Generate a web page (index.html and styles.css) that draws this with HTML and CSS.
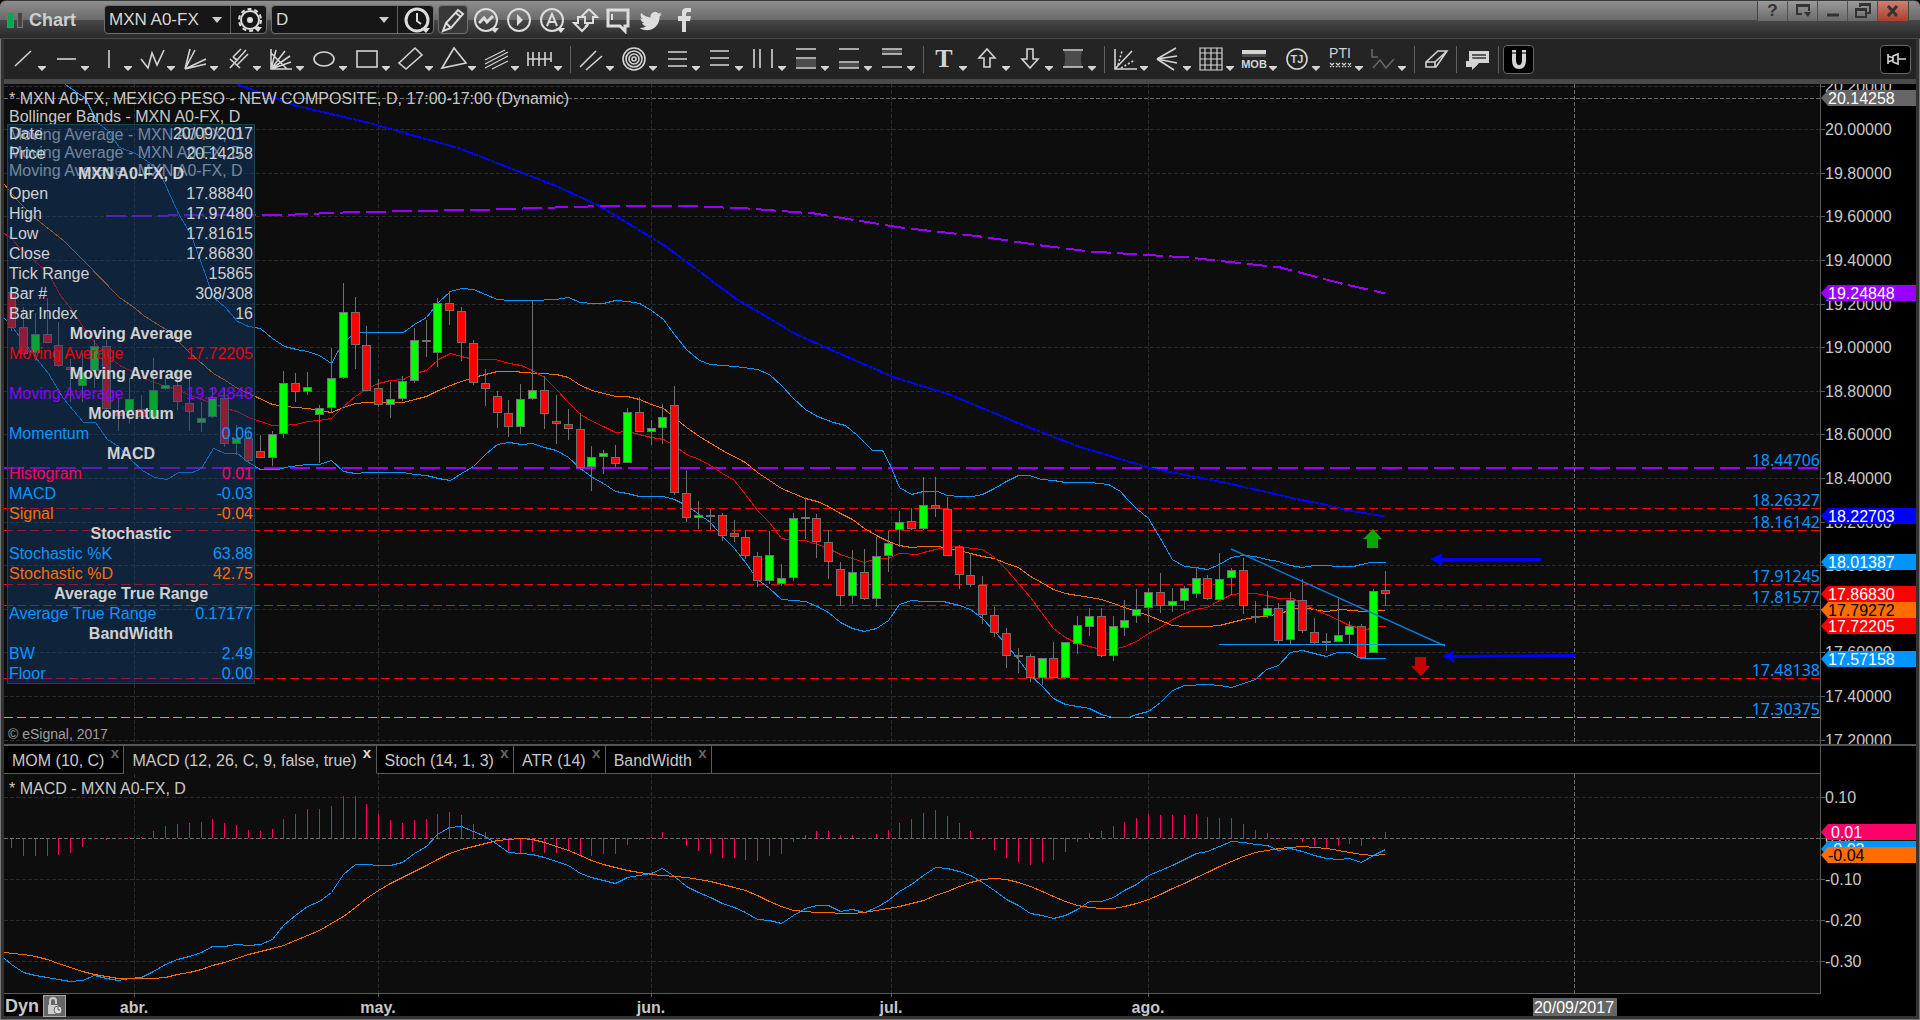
FILE: index.html
```html
<!DOCTYPE html>
<html lang="en">
<head>
<meta charset="utf-8">
<title>Chart - MXN A0-FX</title>
<link rel="stylesheet" href="styles.css">
</head>
<body>
<div class="window">
  <header class="titlebar">
    <span class="logo"><i class="logo-on"></i><i class="logo-off"></i></span>
    <h1 class="title">Chart</h1>
    <div class="combo">
      <label class="pick pick-symbol"><select aria-label="Symbol"><option>MXN A0-FX</option></select><svg width="10" height="6"><path d="M0 0h10l-5 6z"/></svg></label>
      <button class="combo-btn" aria-label="Symbol settings"><svg class="ic" width="28" height="28" viewBox="0 0 28 28"><circle cx="15" cy="14" r="9" stroke-width="2"/><circle cx="15" cy="14" r="11" stroke-width="2" stroke-dasharray="4 3"/><circle class="fill" cx="15" cy="14" r="3"/><path class="fill" d="M18 21h9l-4 5z"/></svg></button>
    </div>
    <div class="combo combo-2">
      <label class="pick pick-interval"><select aria-label="Interval"><option>D</option></select><svg width="10" height="6"><path d="M0 0h10l-5 6z"/></svg></label>
      <button class="combo-btn" aria-label="Time template"><svg class="ic" width="28" height="28" viewBox="0 0 28 28"><circle cx="15" cy="14" r="11" stroke-width="3"/><path d="M15 7v8l4 3" stroke-width="2"/><path class="fill" d="M19 22h9l-4 5z"/></svg></button>
    </div>
    <nav class="quick">
      <button class="pressed" aria-label="Draw"><svg class="ic" width="28" height="28" viewBox="0 0 28 28"><path d="M4 25l3-8L19 4l5 4-12 14zM7 17l5 5M17 7l5 4" stroke-width="2"/></svg></button>
      <button aria-label="Studies"><svg class="ic" width="28" height="28" viewBox="0 0 28 28"><circle cx="14" cy="14" r="11" stroke-width="2"/><path d="M7 17l5-5 3 4 6-6" stroke-width="3"/><path class="fill" d="M18 22h9l-4 5z"/></svg></button>
      <button aria-label="Play"><svg class="ic" width="28" height="28" viewBox="0 0 28 28"><circle cx="14" cy="14" r="11" stroke-width="2"/><path class="fill" d="M12 8v12l6-6z"/></svg></button>
      <button aria-label="Annotate"><svg class="ic" width="28" height="28" viewBox="0 0 28 28"><circle cx="14" cy="14" r="11" stroke-width="2"/><path d="M9 20l5-12 5 12M11 16h6" stroke-width="2"/><path class="fill" d="M18 22h9l-4 5z"/></svg></button>
      <button aria-label="Trade arrows"><svg class="ic" width="28" height="28" viewBox="0 0 28 28"><path d="M18 3l8 8h-4v6h-4l-4 4M18 3l-8 8h4v6h4" stroke-width="2"/><path d="M10 11H7v6H3l8 8 6-6" stroke-width="2"/></svg></button>
      <button aria-label="Comment"><svg class="ic" width="28" height="28" viewBox="0 0 28 28"><path d="M4 4h20v16h-3v5l-5-5H4z" stroke-width="3"/><path d="M8 8v6" stroke-width="2"/></svg></button>
      <button aria-label="Twitter"><svg class="ic" width="28" height="28" viewBox="0 0 28 28"><path class="fill" d="M25 8c-1 .5-1.700.7-2.600.8.9-.6 1.600-1.400 2-2.500-.9.5-1.900.9-2.900 1.100A4.600 4.600 0 0 0 13.600 11.500C9.800 11.300 6.400 9.500 4.200 6.700c-1.200 2.100-.6 4.800 1.400 6.100-.7 0-1.500-.2-2.100-.6 0 2.200 1.600 4.200 3.700 4.600-.7.2-1.400.2-2.100.1.600 1.900 2.300 3.100 4.300 3.200A9.200 9.200 0 0 1 2.600 22c8.900 5.500 20.200.2 20-11.500 1-.7 1.800-1.500 2.400-2.500z"/></svg></button>
      <button aria-label="Facebook"><svg class="ic" width="28" height="28" viewBox="0 0 28 28"><path class="fill" d="M12 26V15H8v-5h4V7c0-4 2-5 5-5h4v4h-3c-1 0-2 .5-2 2v2h5l-1 5h-4v11z"/></svg></button>
    </nav>
    <div class="winbtns">
      <button aria-label="Help">?</button>
      <button aria-label="Detach"><svg width="18" height="18" viewBox="0 0 18 18"><path d="M8 12H3V3h12v6M3 4h12" /><path class="dark" d="M10 10h7l-3 5z"/></svg></button>
      <button aria-label="Minimize"><svg width="18" height="18" viewBox="0 0 18 18"><path d="M3 13h12" stroke-width="3"/></svg></button>
      <button aria-label="Restore"><svg width="18" height="18" viewBox="0 0 18 18"><path d="M6 5V2h10v9h-3M6 3h10M2 7h10v8H2zM2 8h10"/></svg></button>
      <button class="close" aria-label="Close"><svg width="18" height="18" viewBox="0 0 18 18"><path d="M4 4l9 10M13 4L4 14" stroke-width="3"/></svg></button>
    </div>
  </header>

  <div class="frame">
    <nav class="toolbar" id="toolbar"></nav>

    <main class="charts">
      <section class="pane price">
        <svg class="plot" id="pricePlot" role="img" aria-label="Price candles"></svg>
        <svg class="axis" id="priceAxis"></svg>
        <ul class="studies">
          <li>* MXN A0-FX, MEXICO PESO - NEW COMPOSITE, D, 17:00-17:00 (Dynamic)</li>
          <li>Bollinger Bands - MXN A0-FX, D</li>
          <li>Moving Average - MXN A0-FX, D</li>
          <li>Moving Average - MXN A0-FX, D</li>
          <li>Moving Average - MXN A0-FX, D</li>
        </ul>
        <table class="cursor">
          <tr><td>Date</td><td>20/09/2017</td></tr>
          <tr><td>Price</td><td>20.14258</td></tr>
          <tr><th colspan="2">MXN A0-FX, D</th></tr>
          <tr><td>Open</td><td>17.88840</td></tr>
          <tr><td>High</td><td>17.97480</td></tr>
          <tr><td>Low</td><td>17.81615</td></tr>
          <tr><td>Close</td><td>17.86830</td></tr>
          <tr><td>Tick Range</td><td>15865</td></tr>
          <tr><td>Bar #</td><td>308/308</td></tr>
          <tr><td>Bar Index</td><td>16</td></tr>
          <tr><th colspan="2">Moving Average</th></tr>
          <tr class="red"><td>Moving Average</td><td>17.72205</td></tr>
          <tr><th colspan="2">Moving Average</th></tr>
          <tr class="purple"><td>Moving Average</td><td>19.24848</td></tr>
          <tr><th colspan="2">Momentum</th></tr>
          <tr class="blue"><td>Momentum</td><td>0.06</td></tr>
          <tr><th colspan="2">MACD</th></tr>
          <tr class="pink"><td>Histogram</td><td>0.01</td></tr>
          <tr class="blue"><td>MACD</td><td>-0.03</td></tr>
          <tr class="orange"><td>Signal</td><td>-0.04</td></tr>
          <tr><th colspan="2">Stochastic</th></tr>
          <tr class="blue"><td>Stochastic %K</td><td>63.88</td></tr>
          <tr class="orange"><td>Stochastic %D</td><td>42.75</td></tr>
          <tr><th colspan="2">Average True Range</th></tr>
          <tr class="blue"><td>Average True Range</td><td>0.17177</td></tr>
          <tr><th colspan="2">BandWidth</th></tr>
          <tr class="blue"><td>BW</td><td>2.49</td></tr>
          <tr class="blue"><td>Floor</td><td>0.00</td></tr>
        </table>
        <small class="copyright">© eSignal, 2017</small>
      </section>

      <div class="tabrow">
        <div class="tabs" role="tablist">
          <button role="tab">MOM (10, C)<b>x</b></button>
          <button role="tab" class="active" aria-selected="true">MACD (12, 26, C, 9, false, true)<b>x</b></button>
          <button role="tab">Stoch (14, 1, 3)<b>x</b></button>
          <button role="tab">ATR (14)<b>x</b></button>
          <button role="tab">BandWidth<b>x</b></button>
          <span class="rest"></span>
        </div>
        <div class="tabaxis"></div>
      </div>

      <section class="pane macd">
        <svg class="plot" id="macdPlot" role="img" aria-label="MACD"></svg>
        <svg class="axis" id="macdAxis"></svg>
        <ul class="studies"><li>* MACD - MXN A0-FX, D</li></ul>
      </section>

      <footer class="timebar">
        <svg class="times" id="times"></svg>
        <div class="dyn">
          <span>Dyn</span>
          <button aria-label="Lock time template"><svg width="23" height="22" viewBox="0 0 23 22"><rect x="5" y="10" width="10" height="9" fill="#ccc"/><path d="M7 10V6q0-3 3-3t3 3v3" fill="none" stroke="#ccc" stroke-width="2"/><circle cx="15" cy="15" r="4" fill="#ddd" stroke="#666"/><path d="M15 12v3h2" fill="none" stroke="#555"/></svg></button>
        </div>
      </footer>
    </main>
  </div>
</div>
<script src="chart.js"></script>
</body>
</html>
```
FILE: styles.css
```css
* { box-sizing: border-box; }
body { margin: 0; background: #000; color: #c8c8c8; font: 16px/18px "Liberation Sans", Arial, sans-serif; }
button { font: inherit; color: inherit; background: none; border: 0; padding: 0; margin: 0; display: flex; align-items: center; justify-content: center; }
ul { list-style: none; margin: 0; padding: 0; }
.window { height: 100vh; min-height: 700px; display: flex; flex-direction: column; overflow: hidden; }

.titlebar {
  flex: none; height: 39px; display: flex; align-items: center; padding-left: 7px; position: relative;
  border-top: 1px solid #3a3a3a; border-bottom: 1px solid #4c4c4c; border-radius: 6px 6px 0 0;
  background: linear-gradient(#8e8e8e 0, #6a6a6a 19px, #484848 19px, #292929 100%);
}
.logo { display: flex; gap: 3px; width: 22px; }
.logo i { height: 16px; border: 1px solid #777; }
.logo-on { width: 7px; background: #00a84f; }
.logo-off { width: 6px; background: #444; }
.title { margin: 0; width: 75px; font-size: 18px; line-height: 20px; color: #d0d0d0; }
.combo { display: flex; height: 29px; border: 1px solid #707070; border-radius: 4px; background: #161616; }
.combo-2 { margin-left: 4px; }
.pick { display: grid; align-items: center; width: 126px; border-right: 1px solid #606060; }
.pick select, .pick svg { grid-area: 1 / 1; }
.pick select { appearance: none; width: 100%; height: 27px; background: none; border: 0; padding: 0 0 0 4px; color: #d6d6d6; font: 17px/20px "Liberation Sans", Arial, sans-serif; }
.pick svg { justify-self: end; margin-right: 8px; fill: #ccc; pointer-events: none; }
.combo-btn { width: 35px; }
.ic { fill: none; stroke: #ddd; }
.ic .fill { fill: #ddd; stroke: none; }
.quick { display: flex; gap: 3px; margin-left: 4px; }
.quick button { width: 30px; height: 29px; border: 1px solid transparent; border-radius: 4px; }
.quick .pressed { border-color: #707070; background: #383838; }
.winbtns { position: absolute; right: 11px; top: 0; display: flex; border: 1px solid #444; border-top: 0; border-radius: 0 0 3px 3px; }
.winbtns button { width: 30px; height: 20px; border-right: 1px solid #505050; background: linear-gradient(#9a9a9a, #6a6a6a); color: #333; font-weight: bold; font-size: 17px; }
.winbtns svg { fill: none; stroke: #333; stroke-width: 2; }
.winbtns .dark { fill: #333; stroke: none; }
.winbtns .close { border-right: 0; background: linear-gradient(#cf8070, #a8402c); }

.frame { flex: 1; min-height: 0; display: flex; flex-direction: column; background: #333; padding: 0 3px 3px; border: 1px solid #777; border-top: 0; }
.toolbar { flex: none; height: 45px; display: flex; align-items: center; padding: 0 5px 0 3px; background: #242424; border-bottom: 5px solid #4a4a4a; }
.tool { width: 43px; height: 32px; }
.tool.plain { width: 33px; }
.tool svg { fill: none; stroke: #d4d4d4; stroke-width: 1.6; }
.tool .thin { stroke-width: 1.2; }
.tool .fill { fill: #d4d4d4; stroke: none; }
.tool .shade { fill: #4c4c4c; stroke: none; }
.tool .dim { stroke: #666; }
.tool text { fill: #d4d4d4; stroke: none; font-weight: bold; text-anchor: middle; }
.tool .serif { font-family: "Liberation Serif", serif; }
.sep { width: 1px; height: 27px; margin: 0 4px; background: #606060; }
.tool.boxed { width: 31px; height: 29px; border: 1px solid #666; border-radius: 4px; background: #000; }
.pin { margin-left: auto; }

.charts { flex: 1; min-height: 0; display: flex; flex-direction: column; background: #000; }
.pane { position: relative; display: grid; grid-template-columns: minmax(0, 1fr) 96px; min-height: 0; overflow: hidden; }
.price { flex: 3; }
.macd { flex: 1; }
.plot { width: 100%; height: 100%; min-height: 0; background: #0d0d0d; }
.macd .plot { border-bottom: 1px solid #5a5a5a; }
.axis { width: 96px; height: 100%; min-height: 0; border-left: 1px solid #5a5a5a; }
.studies { position: absolute; left: 5px; top: 6px; }
.cursor { position: absolute; left: 3px; top: 40px; width: 248px; border-collapse: collapse; background: rgba(19, 63, 111, .48); outline: 1px solid #1a4558; outline-offset: -1px; color: #d0d0d0; }
.cursor td, .cursor th { height: 20px; padding: 0 2px; line-height: 20px; }
.cursor td + td { text-align: right; }
.red { color: #f00008; }
.purple { color: #9000f8; }
.blue { color: #0c94ff; }
.pink { color: #ff0068; }
.orange { color: #ff6c00; }
.copyright { position: absolute; left: 4px; bottom: 1px; font-size: 14px; color: #a0a0a0; }

.tabrow { flex: none; display: grid; grid-template-columns: minmax(0, 1fr) 96px; border-top: 2px solid #555; }
.tabs { display: flex; height: 28px; }
.tabs button { padding: 2px 4px 0 8px; gap: 6px; border: solid #5a5a5a; border-width: 0 1px 1px 0; background: #000; }
.tabs b { align-self: flex-start; width: 9px; font-size: 15px; line-height: 10px; color: #666; }
.tabs .active { background: #0d0d0d; border-bottom-color: #0d0d0d; }
.tabs .active b { color: #ddd; }
.rest { flex: 1; border-bottom: 1px solid #5a5a5a; }
.tabaxis { border-left: 1px solid #5a5a5a; }

.timebar { flex: none; position: relative; height: 22px; }
.times { display: block; width: 100%; height: 22px; }
.dyn { position: absolute; left: 1px; top: 0; display: flex; align-items: center; gap: 4px; }
.dyn span { font-weight: bold; font-size: 18px; line-height: 24px; }
.dyn button { width: 23px; height: 22px; background: #666; outline: 1px solid #aaa; outline-offset: -1px; }

svg text { fill: #c8c8c8; font-size: 16px; }
.month { font-weight: bold; text-anchor: middle; }
.level { fill: #0c94ff; font-family: "Noto Sans", sans-serif; text-anchor: end; }
.line { fill: none; shape-rendering: crispEdges; }
.tool text.s10 { font-size: 11px; }
.tool text.s14 { font-size: 14px; font-weight: normal; }
.tool text.s24 { font-size: 26px; }
```
FILE: chart.js
```js
// ---------- drawing toolbar ----------
const T = {
  line: '<path d="M8 23L24 8"/>',
  hline: '<path d="M7 16h19"/>',
  vline: '<path d="M16 7v18"/>',
  zig: '<path d="M5 16l7 9 4-15 5 12 7-15"/>',
  fan: '<path d="M11 6L6 26L16 7M27 16L6 26L27 21"/>',
  fork: '<path d="M8 16l10 9M8 25L24 7M11 14l8-8M15 22l11-11M11 14l4 3"/>',
  gann: '<path d="M6 6v20h21M6 26L11 7M6 26L20 8M6 26L25 13M6 26L26 19M6 10l16 16"/>',
  oval: '<ellipse cx="16" cy="16" rx="10" ry="7"/>',
  rect: '<rect x="6" y="8" width="20" height="16"/>',
  para: '<path d="M5 20L21 5l7 7L12 26z"/>',
  tri: '<path d="M5 25L17 5l12 15z"/>',
  diag: '<path d="M5 17L25 7M5 21L28 9M5 25L28 13M12 26L28 18" class="thin"/>',
  cyc: '<path d="M5 16h23M5 9v14M10 9v14M16 9v14M22 9v14M28 9v10"/>',
  par: '<path d="M5 24L21 8M11 27L27 13"/>',
  rings: '<circle cx="16" cy="16" r="11"/><circle cx="16" cy="16" r="8"/><circle cx="16" cy="16" r="5"/><circle cx="16" cy="16" r="2"/>',
  h3: '<path d="M7 9h19M7 16h19M7 23h19"/>',
  h3b: '<path d="M6 8h19M6 15h19M6 22h19"/>',
  v3: '<path d="M7 6v19M13 6v19M25 6v19"/>',
  b1: '<path class="shade" d="M6 16h20v8H6z"/><path d="M6 6h20M6 15h20M6 25h20"/>',
  b2: '<path class="shade" d="M6 20h20v5H6z"/><path d="M6 6h20M6 19h20M6 25h20"/>',
  b3: '<path class="shade" d="M6 6h20v5H6z"/><path d="M6 6h20M6 11h20M6 24h20"/>',
  text: '<text class="serif s24" x="16" y="24">T</text>',
  up: '<path d="M16 6l8 9h-5v9h-6v-9H8z"/>',
  down: '<path d="M16 25l8-9h-5V6h-6v10H8z"/>',
  area: '<path class="shade" d="M7 8h18q-2 8 0 16H7q2-8 0-16z"/><path d="M6 7h20M6 24h20"/>',
  regr: '<path d="M6 6v20h22M6 26L23 8"/><path d="M9 22L13 8M12 25l14-8" stroke-dasharray="2 2"/>',
  less: '<path d="M5 16L24 5M5 16L25 13M5 16L25 20M5 16L22 27"/>',
  grid: '<path d="M5 5h22v22H5zM5 10h22M5 16h22M5 22h22M10 5v22M16 5v22M22 5v22" class="thin"/>',
  mob: '<path class="fill" d="M4 7h24v4H4z"/><path class="shade" d="M4 11h24v3H4z"/><text class="s10" x="16" y="25">MOB</text>',
  tj: '<circle cx="16" cy="16" r="10"/><text class="s10" x="16" y="20">TJ</text>',
  pti: '<text class="s14" x="16" y="15">PTI</text><path d="M6 20l4 4M10 20l-4 4M12 20l4 4M16 20l-4 4M18 20l4 4M22 20l-4 4M24 20l3 4M27 20l-3 4" class="thin"/>',
  wave: '<path class="dim" d="M5 6v8h6M6 25l7-8 6 8 8-9"/>',
  eraser: '<path d="M6 19L18 8h9L16 24H6zM6 19h9L27 8M15 19v5"/>',
  note: '<path class="fill" d="M7 8h20v12H17l-5 5v-5H7z"/><path d="M10 12h14M10 15h14" style="stroke:#333"/><path class="fill" d="M4 18h6v-3l6 6-6 6v-3H4z"/>'
};
const groups = [
  ['line','hline','vline','zig','fan','fork','gann','oval','rect','para','tri','diag','cyc'],
  ['par','rings','h3','h3b','v3','b1','b2','b3'],
  ['text','up','down','area'],
  ['regr','less','grid','mob','tj','pti','wave']
];
const tool = n => `<button class="tool" aria-label="${n}"><svg width="43" height="32">${T[n]}<path class="fill" d="M31 23h8v1l-4 4-4-4z"/></svg></button>`;
const plain = n => `<button class="tool plain" aria-label="${n}"><svg width="32" height="32">${T[n]}</svg></button>`;
const sep = '<span class="sep"></span>';
document.getElementById('toolbar').innerHTML =
  groups.map(g => g.map(tool).join('')).join(sep) + sep + plain('eraser') + sep + plain('note') + sep +
  '<button class="tool boxed" aria-label="Magnet"><svg width="28" height="28"><path d="M9 5v10q0 7 5 7t5-7V5" style="stroke-width:4"/><path d="M6 8h16" style="stroke:#000;stroke-width:1"/></svg></button>' +
  '<button class="tool boxed pin" aria-label="Pin toolbar"><svg width="28" height="28"><path d="M6 9v10M6 11l5 2v2l-5 2M11 11l5-2v10l-5-2zM16 14h8" /></svg></button>';

// ---------- data, in steps on the base grid of the scale ----------
const PRICE = { top: 84, span: 660 };   // 218 steps per 1.00
const MACD = { top: 774, span: 220, zero: 838 };   // 410 steps per 1.00
const LEFT = 4, FIRST = 11, STEP = 11.845;

// side, high, body top, body bottom, low
const candles = `r290 292 328 331;r307 327 354 354;g313 334 353 361;r298 334 343 343;r322 345 366 367;r359 367 370 402;g353 372 386 402;g340 346 371 388;r340 346 409 415;r398 411 416 431;g378 399 412 424;r395 409 417 418;g358 390 418 420;g378 385 389 390;r369 385 402 410;r378 403 412 431;g402 418 423 432;g387 397 417 418;r388 398 444 447;g425 438 444 455;r430 438 461 462;r435 451 458 458;g431 434 458 466;g371 383 434 438;r373 383 392 402;g372 387 392 395;g405 408 415 463;g348 378 408 412;g283 312 378 379;r297 312 345 369;r326 345 391 391;r379 388 405 407;g382 399 405 418;g376 381 399 401;g328 340 381 383;d320 340 342 357;g298 303 353 367;r291 303 311 325;r307 311 343 361;r340 343 383 385;r369 383 389 406;r391 396 413 428;r400 413 427 437;g384 399 427 434;g300 390 399 400;r376 390 414 429;r395 421 424 444;r409 424 429 440;r413 429 468 470;g446 457 467 491;g450 453 457 474;r445 457 464 467;g408 412 463 463;r397 412 432 432;g420 428 432 445;g404 417 428 444;r386 405 493 495;r471 493 518 522;g501 515 518 529;d509 515 517 530;r513 515 536 541;r520 533 537 542;r530 537 556 559;r552 556 581 587;g531 555 581 584;g564 578 584 586;g513 518 578 581;d497 517 519 539;r514 518 542 558;r530 542 562 579;r562 569 596 606;g550 572 596 604;r549 572 599 600;g537 556 599 607;g531 543 556 572;g511 522 530 547;r508 521 529 530;g477 505 529 530;r477 505 509 517;r497 509 556 556;r545 547 575 589;r554 575 585 587;r576 585 615 624;r607 615 633 637;r628 633 656 668;d648 655 657 673;r654 656 678 682;g658 658 678 685;r642 658 678 678;g642 642 678 679;g616 625 644 654;g608 616 627 636;r608 616 656 657;g616 626 656 661;g600 620 628 636;g589 609 616 623;g588 592 608 623;r573 592 606 613;g588 601 606 612;g586 588 601 610;g567 578 594 598;r575 578 599 600;g553 579 600 600;g568 570 578 595;r558 570 606 614;d601 616 618 623;g591 608 616 618;r603 608 641 644;g592 600 640 645;r579 600 631 633;r618 632 643 645;d633 641 643 651;g599 635 642 642;g621 626 635 644;r624 626 658 658;g589 591 653 653;r571 590 594 606`
  .split(';').map(s => [s[0], ...s.slice(1).split(' ').map(Number)]);

const upper = '65,84 85,98 97,122 107,130 119,147 135,153 150,163 163,180 178,213 190,233 200,260 213,297 225,307 237,321 248,326 260,328 272,338 284,346 296,349 307,351 319,355 331,363 338,350 348,338 355,332 403,332 414,324 426,317 438,302 450,291 461,288 473,289 485,294 497,299 509,300 532,300 556,299 568,297 580,302 592,303 603,303 615,300 627,301 639,303 651,310 663,319 674,334 686,349 699,360 710,364 735,366 757,369 769,374 781,385 793,398 805,409 817,416 833,422 845,425 857,435 872,450 882,450 890,465 899,487 911,494 923,491 937,491 947,495 959,496 972,496 982,494 994,488 1006,481 1018,475 1029,475 1041,479 1053,480 1065,482 1090,482 1108,484 1120,491 1128,500 1136,508 1148,518 1160,538 1172,559 1184,566 1195,567 1207,569 1219,564 1231,557 1243,555 1255,556 1266,559 1278,561 1290,565 1302,567 1314,565 1326,565 1337,566 1353,566 1361,564 1370,562 1385,562';
const lower = '4,318 13,328 35,357 48,373 63,398 83,422 95,422 107,439 118,446 130,459 142,470 154,477 167,479 178,472 192,472 201,468 213,448 225,453 237,453 248,462 260,469 277,469 290,466 307,464 319,464 331,460 343,471 355,473 367,472 403,472 414,474 426,475 438,478 450,480 461,473 473,466 485,454 497,444 509,442 521,444 532,443 544,447 556,450 568,457 580,468 592,477 603,483 615,491 627,493 639,496 663,496 674,499 686,505 699,514 710,522 722,536 734,548 745,562 757,579 769,588 781,599 793,600 805,601 817,606 828,612 840,622 852,628 864,631 876,628 888,620 899,604 911,600 923,601 943,601 959,605 970,609 982,618 994,631 1006,644 1018,659 1030,675 1041,685 1053,698 1065,704 1077,706 1089,708 1101,714 1112,717 1128,717 1136,714 1148,711 1160,702 1172,690 1184,685 1207,684 1219,685 1231,687 1243,683 1255,679 1266,669 1278,665 1290,652 1302,650 1314,653 1326,656 1337,652 1350,652 1358,657 1361,658 1385,658';
const fast = '4,233 11,238 20,248 48,273 60,295 72,310 83,327 94,342 107,355 119,365 132,371 143,378 154,382 165,386 177,389 190,395 213,403 225,408 237,411 248,417 260,421 272,425 282,425 296,424 307,421 319,420 331,418 343,406 355,396 367,388 378,383 390,380 403,379 414,373 426,370 438,359 450,353 461,356 473,359 495,359 509,363 521,365 532,370 544,377 556,389 568,402 580,414 592,421 603,426 615,432 627,431 639,434 651,437 663,439 674,445 686,454 699,459 710,465 722,473 734,480 745,494 757,510 769,522 781,538 793,540 805,540 817,544 828,548 840,554 852,558 864,562 876,558 888,558 899,553 917,554 923,552 935,549 947,547 959,546 972,548 982,549 994,557 1006,569 1018,583 1030,597 1041,612 1053,628 1065,637 1077,643 1089,646 1101,649 1113,649 1124,646 1136,641 1148,633 1160,627 1172,619 1184,613 1195,609 1207,607 1219,600 1231,594 1243,593 1255,593 1266,595 1278,598 1292,598 1302,603 1314,609 1326,614 1337,619 1349,625 1361,628 1367,629 1373,626 1385,626';
const mid = '4,184 17,200 35,218 63,240 83,260 119,297 135,308 143,315 167,330 190,353 213,373 225,380 237,388 257,397 272,404 284,406 296,407 307,408 319,410 331,412 343,407 355,403 367,402 403,402 414,399 426,396 438,390 450,385 461,381 473,377 485,374 497,371 517,371 521,372 540,373 556,374 568,377 580,385 592,390 615,396 627,396 639,399 651,404 663,408 674,417 686,427 699,436 722,450 745,462 757,472 769,480 781,488 793,493 805,498 817,501 828,506 840,513 852,519 864,528 876,535 888,541 899,545 911,547 923,546 938,546 947,548 959,550 970,553 982,556 994,558 1006,563 1018,567 1030,576 1041,582 1053,589 1065,593 1077,595 1089,597 1101,599 1113,603 1124,607 1136,611 1148,615 1160,620 1172,625 1184,626 1207,626 1219,625 1231,622 1243,619 1255,617 1270,615 1283,612 1292,608 1307,608 1326,611 1340,609 1353,610 1361,611 1385,610';
const slow = '237,84 263,93 294,105 367,122 459,148 557,186 600,206 667,247 735,298 796,334 857,361 894,377 949,394 1016,422 1078,446 1151,468 1224,482 1298,499 1323,504 1348,510 1385,516';
const year = '106,216 126,215 152,216 168,215 200,214 270,215 343,212 490,209 588,206 673,205 747,208 814,213 900,227 980,236 1041,245 1090,251 1188,257 1280,267 1341,283 1385,293';

const hist = [-10,-18,-18,-18,-17,-15,-9,-1,-2,-1,1,1,7,12,14,15,16,19,15,13,8,7,9,19,24,29,29,32,42,42,34,24,18,15,18,19,24,26,23,14,6,-3,-13,-15,-14,-15,-15,-13,-17,-18,-16,-16,-7,-2,1,6,0,-8,-13,-16,-20,-20,-22,-23,-18,-16,-4,3,7,7,3,3,0,4,8,15,19,25,28,22,15,7,-2,-12,-20,-24,-27,-24,-22,-14,-4,5,7,12,16,20,24,23,23,23,24,21,20,20,14,8,5,-1,-1,-4,-8,-11,-8,-6,-8,1,6];
const macd = [964,972,975,977,979,981,980,975,978,980,978,977,971,964,959,956,952,946,946,944,945,944,939,925,915,906,901,892,874,864,864,865,865,862,853,846,834,827,826,831,836,844,852,853,854,857,861,865,873,877,880,883,877,875,873,868,876,886,892,897,903,907,912,919,920,923,915,908,905,905,911,909,912,907,900,891,884,875,867,868,871,875,882,890,899,905,913,915,918,915,909,901,901,897,890,884,875,870,865,859,853,851,846,841,842,844,845,850,848,851,855,858,859,858,862,855,849];
const signal = [953,954,956,959,963,967,971,974,976,978,978,978,978,977,974,972,969,965,962,958,954,951,948,945,940,935,930,923,916,907,898,890,883,877,871,865,859,853,849,846,843,840,839,838,839,842,846,850,855,860,864,867,870,872,874,875,876,877,879,881,884,887,890,895,901,906,910,911,912,912,913,913,912,910,908,906,903,900,895,891,886,882,879,878,879,882,886,891,896,901,905,907,908,908,906,903,899,894,888,883,877,872,866,861,856,852,850,848,847,846,847,848,850,852,854,855,854];

const months = [[134, 'abr.'], [378, 'may.'], [651, 'jun.'], [891, 'jul.'], [1148, 'ago.']];
const CURSOR = 1574;
const barX = i => Math.round(FIRST + STEP * i) - LEFT;
const priceStep = p => 478 - (p - 18.4) * 218;

const hl = (y, w, color, dash, sw = 1) => `<path class="line" d="M0 ${y}H${w}" stroke="${color}" stroke-width="${sw}" stroke-dasharray="${dash}"/>`;
const vl = (x, h, color) => `<path class="line" d="M${x}.5 0V${h}" stroke="${color}" stroke-dasharray="4 2"/>`;
const tag = (y, bg, text, fg = '#fff', x = 7) =>
  `<path d="M0 ${y}l7 -8H96v16H7z" fill="${bg}"/><text x="${x}" y="${y + 6}" style="fill:${fg}">${text}</text>`;

function drawPrice() {
  const el = document.getElementById('pricePlot');
  const w = el.clientWidth, h = el.clientHeight;
  const Y = s => Math.round((s - PRICE.top) * h / PRICE.span);
  const P = p => Y(priceStep(p));
  const poly = (pts, color, extra = '') =>
    `<polyline class="line" points="${pts.split(' ').map(q => { const [a, b] = q.split(','); return (a - LEFT + .5) + ',' + (Y(b) + .5); }).join(' ')}" stroke="${color}" ${extra}/>`;
  let s = '';
  for (let p = 20.2; p > 17.1; p -= .2) s += hl(P(p) + .5, w, '#2c2c2c', '4 2');
  months.forEach(m => s += vl(m[0] - LEFT, h, '#2c2c2c'));
  s += hl(P(20.14258) + .5, w, '#707070', '4 2') + vl(CURSOR - LEFT, h, '#707070');
  const levels = [18.44706, 18.26327, 18.16142, 17.91245, 17.81577, 17.48138, 17.30375];
  levels.forEach((p, i) => {
    s += i === 0 ? hl(P(p), w, '#9900ff', '20 6', 2) : hl(P(p) + .5, w, i === 6 ? '#00e8f0' : '#ff0000', '9 4');
    s += `<text class="level" x="${w}" y="${P(p) - 2}">${p.toFixed(5)}</text>`;
  });
  s += poly(upper, '#0c94ff') + poly(lower, '#0c94ff') + poly(mid, '#ff6c00') + poly(fast, '#f00000');
  s += poly(slow, '#0000ff', 'stroke-width="2" stroke-dasharray="12 1 4 1"') + poly(year, '#9900ff', 'stroke-width="2" stroke-dasharray="20 6"');
  candles.forEach(([k, hi, t, b, lo], i) => {
    const x = barX(i), fill = { r: '#ff0000', g: '#00ff00', d: '#707070' }[k];
    s += `<path class="line" d="M${x}.5 ${Y(hi)}V${Y(lo)}" stroke="#707070"/>` +
      `<rect class="line" x="${x - 3.5}" y="${Y(t) + .5}" width="8" height="${Math.max(1, Y(b) - Y(t) - 1)}" style="fill:${fill}" stroke="#707070"/>`;
  });
  const X = x => x - LEFT;
  s += `<path d="M${X(1231)} ${Y(549)}L${X(1445)} ${Y(646)}" stroke="#0a78d0" stroke-width="1.4"/>` +
    `<path class="line" d="M${X(1219)} ${Y(644) + .5}H${X(1445)}" stroke="#0c94ff"/>`;
  [[1431, 559, 1541, 559], [1443, 656, 1575, 655]].forEach(([a, b, c, d]) =>
    s += `<path d="M${X(a + 8)} ${Y(b) + .5}L${X(c)} ${Y(d) + .5}" stroke="#0000ff" stroke-width="3"/><path d="M${X(a)} ${Y(b)}l11 -5l-2 5l2 6z" fill="#0000ff" stroke="#0000ff"/>`);
  s += `<path d="M${X(1373)} ${Y(529)}l9 10h-4v9h-11v-9h-4z" fill="#00a800"/>` +
    `<path d="M${X(1421)} ${Y(676)}l-10 -10h4v-9h11v9h4z" fill="#c80000"/>`;
  el.innerHTML = s;

  let a = '';
  for (let p = 20.2; p > 17.1; p -= .2)
    a += `<path class="line" d="M0 ${P(p) + .5}h4" stroke="#5a5a5a"/><text x="4" y="${P(p) + 6}">${p.toFixed(5)}</text>`;
  [[20.14258, '#666'], [19.24848, '#9900ff'], [18.22703, '#0000ff'], [18.01387, '#0094ff'], [17.72205, '#ff0000'], [17.8683, '#ff0000'], [17.79272, '#ff6c00', '#000'], [17.57158, '#0094ff']]
    .forEach(([p, bg, fg]) => a += tag(P(p), bg, p.toFixed(5), fg));
  document.getElementById('priceAxis').innerHTML = a;
}

function drawMacd() {
  const el = document.getElementById('macdPlot');
  const w = el.clientWidth, h = el.clientHeight, k = h / (MACD.span - 1);
  const Y = s => Math.round((s - MACD.top) * k);
  const V = v => Y(MACD.zero - v * 410);
  let s = '', a = '';
  [.1, -.1, -.2, -.3].forEach(v => s += hl(V(v) + .5, w, '#2c2c2c', '4 2'));
  months.forEach(m => s += vl(m[0] - LEFT, h, '#2c2c2c'));
  s += vl(CURSOR - LEFT, h, '#707070') + hl(V(0) + .5, w, '#707070', '4 2');
  hist.forEach((v, i) => { if (v) s += `<path class="line" d="M${barX(i)}.5 ${V(0)}V${Y(MACD.zero - v)}" stroke="#ff0068"/>`; });
  const poly = (start, arr, c) => `<polyline class="line" points="0,${Y(start)} ${arr.map((y, i) => barX(i) + .5 + ',' + (Y(y) + .5)).join(' ')}" stroke="${c}"/>`;
  s += poly(958, macd, '#0c94ff') + poly(952, signal, '#ff6c00');
  el.innerHTML = s;
  [.1, 0, -.1, -.2, -.3].forEach(v =>
    a += `<path class="line" d="M0 ${V(v) + .5}h4" stroke="#5a5a5a"/><text x="4" y="${V(v) + 6}">${v.toFixed(2)}</text>`);
  a += tag(Y(832), '#ff0068', '0.01', '#fff', 10) + tag(Y(849), '#0094ff', '-0.03') + tag(Y(855), '#ff6c00', '-0.04', '#000');
  document.getElementById('macdAxis').innerHTML = a;
}

function drawTimes() {
  const x = CURSOR - LEFT;
  document.getElementById('times').innerHTML =
    months.map(([m, t]) => `<path class="line" d="M${m - LEFT}.5 0v3" stroke="#5a5a5a"/><text class="month" x="${m - LEFT}" y="19">${t}</text>`).join('') +
    `<rect x="${x - 41}" y="4" width="84" height="18" fill="#666"/><text x="${x}" y="19" text-anchor="middle" style="fill:#fff">20/09/2017</text>`;
}
function draw() { drawPrice(); drawMacd(); drawTimes(); }
addEventListener('resize', draw);
draw();
```
